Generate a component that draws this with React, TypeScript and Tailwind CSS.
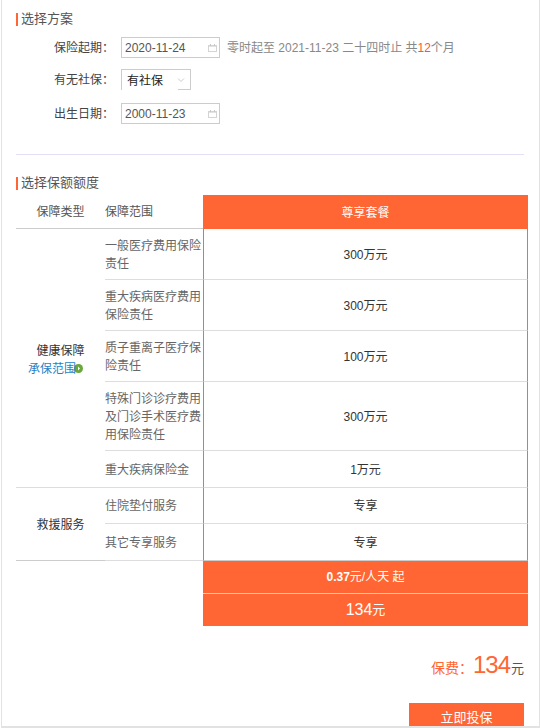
import React from "react";

const font = { fontFamily: '"Liberation Sans","Noto Sans CJK SC",sans-serif' };

function Cal() {
  return (
    <svg width="9" height="8" viewBox="0 0 9 8" className="shrink-0 -mt-[1px]" fill="none">
      <rect x="0.5" y="1.5" width="8" height="6" stroke="#d4d4d4" />
      <rect x="1" y="2" width="7" height="1" fill="#e2e2e2" />
      <path d="M2.5 0v2M6.5 0v2" stroke="#c8c8c8" />
    </svg>
  );
}

function Heading({ children }: { children: React.ReactNode }) {
  return (
    <div className="flex items-center h-[14px] text-[13px] text-[#555]">
      <span className="w-[2px] h-[13px] bg-[#ff6633] mr-[3px]" />
      {children}
    </div>
  );
}

function DateBox({ value }: { value: string }) {
  return (
    <div className="w-[99px] h-[21px] border border-[#ccc] flex items-center justify-between pl-[3px] pr-[2px] pt-[1px] text-[12px] text-[#555]">
      <span>{value}</span>
      <Cal />
    </div>
  );
}

function Label({ children }: { children: React.ReactNode }) {
  return <div className="w-[105px] pr-[7px] text-right text-[12px] text-[#444]">{children}</div>;
}

const rows: [string, string, string][] = [
  ["一般医疗费用保险责任", "300万元", "h-[51px]"],
  ["重大疾病医疗费用保险责任", "300万元", "h-[51px]"],
  ["质子重离子医疗保险责任", "100万元", "h-[51px]"],
  ["特殊门诊诊疗费用及门诊手术医疗费用保险责任", "300万元", "h-[69px]"],
  ["重大疾病保险金", "1万元", "h-[37px]"],
];
const rows2: [string, string, string][] = [
  ["住院垫付服务", "专享", "h-[36px]"],
  ["其它专享服务", "专享", "h-[37px]"],
];

function Row({ r, last }: { r: [string, string, string]; last?: boolean }) {
  return (
    <div className={`flex ${r[2]}`}>
      <div className="w-[98px] pt-[1px] flex items-center text-[12px] leading-[18px] text-[#666] border-b border-[#ddd]">
        <span className="w-[98px]">{r[0]}</span>
      </div>
      <div className={`w-[325px] pt-[1px] flex items-center justify-center bg-white border-l border-r border-[#e8704a] text-[12px] text-[#333] border-b ${last ? "border-b-[#ccc]" : "border-b-[#ddd]"}`}>
        {r[1]}
      </div>
    </div>
  );
}

export default function App() {
  return (
    <div style={font} className="w-[540px] h-[728px] bg-white overflow-hidden pl-[1px]">
      <div className="w-[539px] h-[728px] border-l border-r border-b-2 border-[#e2e2e2] pl-[14px] pt-[12px] overflow-hidden">
        <Heading>选择方案</Heading>
        <div className="mt-[11px] flex items-center h-[21px]">
          <Label>保险起期：</Label>
          <DateBox value="2020-11-24" />
          <span className="ml-[7px] text-[12px] text-[#888]">
            零时起至 2021-11-23 二十四时止 共<span className="text-[#ff5533]">12</span>个月
          </span>
        </div>
        <div className="mt-[11px] flex items-center h-[21px]">
          <Label>有无社保：</Label>
          <div className="relative w-[70px] h-[21px] border border-b-0 border-[#ccc] flex items-center justify-between pl-[5px] pr-[5px] pt-[1px] text-[12px] text-[#222]">
            <span>有社保</span>
            <svg width="8" height="5" viewBox="0 0 8 5" fill="none"><path d="M1 .5l3 3 3-3" stroke="#ccc" /></svg>
            <span className="absolute right-0 bottom-0 w-[12px] h-px bg-[#ccc]" />
          </div>
        </div>
        <div className="mt-[13px] flex items-center h-[21px]">
          <Label>出生日期：</Label>
          <DateBox value="2000-11-23" />
        </div>
        <div className="mt-[30px] h-px w-[508px] bg-[#e3e0f8]" />
        <div className="mt-[21px]">
          <Heading>选择保额额度</Heading>
        </div>
        <div className="mt-[5px] w-[512px]">
          <div className="flex h-[34px]">
            <div className="w-[89px] pt-[1px] border-b border-[#ccc] flex items-center justify-center text-[12px] text-[#555]">保障类型</div>
            <div className="w-[98px] pt-[1px] border-b border-[#ccc] flex items-center text-[12px] text-[#555]">保障范围</div>
            <div className="w-[325px] pt-[1px] bg-[#ff6633] text-white flex items-center justify-center text-[12px]">尊享套餐</div>
          </div>
          <div className="flex">
            <div className="w-[89px] pt-[3px] border-b border-[#ddd] flex flex-col items-center justify-center text-[12px] text-[#333] leading-[18px] h-[259px]">
              <span>健康保障</span>
              <span className="flex items-center text-[#2a7fc4] mr-[10px]">
                <span className="relative z-10">承保范围</span>
                <svg width="9" height="9" viewBox="0 0 9 9" className="-ml-[2px] shrink-0">
                  <circle cx="4.5" cy="4.5" r="4.5" fill="#6aa83a" />
                  <path d="M4 2.5l2 2-2 2z" fill="#fff" />
                </svg>
              </span>
            </div>
            <div>{rows.map((r) => <Row key={r[0]} r={r} />)}</div>
          </div>
          <div className="flex">
            <div className="w-[89px] pt-[2px] border-b border-[#ccc] flex items-center justify-center text-[12px] text-[#333] h-[73px]">救援服务</div>
            <div>{rows2.map((r, i) => <Row key={r[0]} r={r} last={i === 1} />)}</div>
          </div>
          <div className="ml-[187px] w-[325px] bg-[#ff6633] text-white">
            <div className="h-[33px] flex items-center justify-center text-[12px] border-b border-[#ffc9a8]"><span className="font-bold">0.37</span>元/人天 起</div>
            <div className="h-[32px] flex items-center justify-center text-[16px]">134<span className="text-[13px]">元</span></div>
          </div>
        </div>
        <div className="mt-[24px] w-[508px] flex items-baseline justify-end text-[14px] text-[#ff6633]">
          保费：<span className="text-[24px] leading-[30px] tracking-[-1px]">134</span><span className="ml-[1px] text-[13px] text-[#555]">元</span>
        </div>
        <div className="mt-[23px] ml-[393px] w-[115px] h-[30px] bg-[#ff6633] text-white flex items-center justify-center text-[13px]">立即投保</div>
      </div>
    </div>
  );
}
